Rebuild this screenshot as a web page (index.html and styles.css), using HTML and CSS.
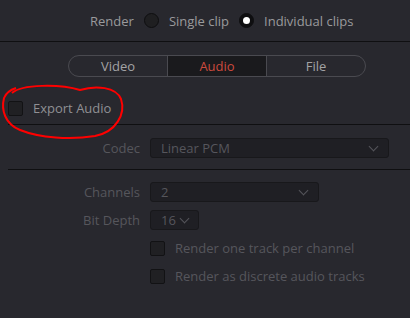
FILE: index.html
```html
<!DOCTYPE html>
<html lang="en">
<head>
  <meta charset="UTF-8">
  <title>Render Settings</title>
  <link rel="stylesheet" href="styles.css">
</head>
<body>
  <div class="panel">
    <div class="render-row">
      <span class="render-label">Render</span>
      <span class="radio"></span>
      <span class="radio-text">Single clip</span>
      <span class="radio checked"></span>
      <span class="radio-text">Individual clips</span>
    </div>

    <div class="tabs">
      <div class="tab">Video</div>
      <div class="tab active">Audio</div>
      <div class="tab">File</div>
    </div>

    <div class="export-row">
      <span class="checkbox"></span>
      <span class="export-text">Export Audio</span>
    </div>

    <div class="section codec">
      <div class="field">
        <span class="field-label">Codec</span>
        <div class="select wide">Linear PCM<span class="chev"></span></div>
      </div>
    </div>

    <div class="section options">
      <div class="field">
        <span class="field-label">Channels</span>
        <div class="select mid">2<span class="chev"></span></div>
      </div>
      <div class="field">
        <span class="field-label">Bit Depth</span>
        <div class="select small">16<span class="chev"></span></div>
      </div>
      <div class="check-line">
        <span class="checkbox"></span>
        <span>Render one track per channel</span>
      </div>
      <div class="check-line">
        <span class="checkbox"></span>
        <span>Render as discrete audio tracks</span>
      </div>
    </div>

    <!-- hand drawn annotation -->
    <svg class="scribble" width="130" height="60" viewBox="0 0 130 60">
      <path d="M12 9 C 22 0 60 0 80 6 C 96 1 116 3 121 15 C 126 30 116 48 95 52 C 70 56 40 54 20 46 C 5 40 1 26 4 14 C 6 9 10 6 16 4" fill="none" stroke="#f00" stroke-width="2"/>
    </svg>
  </div>
</body>
</html>
```

FILE: styles.css
```css
* {
  margin: 0;
  padding: 0;
  box-sizing: border-box;
}
body {
  width: 410px;
  height: 318px;
  background: #28282e;
  font-family: "Open Sans", sans-serif;
  font-size: 13px;
  color: #9a9a9c;
  overflow: hidden;
}
.panel {
  position: relative;
  height: 318px;
}
.render-row {
  height: 42px;
  display: flex;
  align-items: center;
  padding-left: 90px;
  border-bottom: 1px solid #0f0f11;
}
.render-label {
  margin-right: 10px;
}
.radio {
  width: 15px;
  height: 15px;
  border-radius: 50%;
  background: #1f1f21;
  border: 1px solid #0e0e10;
  margin-right: 10px;
  position: relative;
}
.radio.checked {
  background: #0e0e10;
}
.radio.checked::after {
  content: "";
  position: absolute;
  left: 3px;
  top: 3px;
  width: 7px;
  height: 7px;
  border-radius: 50%;
  background: #fff;
}
.radio-text {
  margin-right: 10px;
}
.tabs {
  margin: 13px 0 0 68px;
  width: 298px;
  height: 22px;
  display: flex;
  border: 1px solid #4a4a50;
  border-radius: 11px;
  overflow: hidden;
}
.tab {
  flex: 1;
  display: flex;
  align-items: center;
  justify-content: center;
  color: #a3a3a5;
}
.tab + .tab {
  border-left: 1px solid #4a4a50;
}
.tab.active {
  background: #1a1a1d;
  color: #cc4a3e;
}
.export-row {
  margin-left: 8px;
  height: 48px;
  display: flex;
  align-items: center;
  border-bottom: 1px solid #0f0f11;
  padding-top: 15px;
}
.checkbox {
  width: 15px;
  height: 15px;
  background: #202023;
  border: 1px solid #121214;
  border-radius: 2px;
  flex-shrink: 0;
}
.export-text {
  margin-left: 10px;
  color: #909094;
}
.section {
  margin-left: 8px;
}
.codec {
  height: 45px;
  padding-top: 13px;
  border-bottom: 1px solid #0f0f11;
}
.options {
  padding-top: 12px;
  display: flex;
  flex-direction: column;
  gap: 8px;
}
.field {
  display: flex;
  align-items: center;
  height: 20px;
}
.field-label {
  width: 142px;
  padding-right: 10px;
  text-align: right;
  color: #56565c;
}
.select {
  height: 20px;
  background: #1f1f24;
  border: 1px solid #18181b;
  border-radius: 3px;
  color: #56565c;
  padding-left: 10px;
  display: flex;
  align-items: center;
  position: relative;
}
.select.wide {
  width: 239px;
}
.select.mid {
  width: 169px;
}
.select.small {
  width: 49px;
}
.chev {
  position: absolute;
  right: 11px;
  top: 4px;
  width: 7px;
  height: 7px;
  border-right: 1.5px solid #55555b;
  border-bottom: 1.5px solid #55555b;
  transform: rotate(45deg);
}
.small .chev {
  right: 10px;
}
.check-line {
  display: flex;
  align-items: center;
  height: 20px;
  margin-left: 142px;
  color: #56565c;
}
.check-line .checkbox {
  margin-right: 10px;
}
.scribble {
  position: absolute;
  left: 0;
  top: 84px;
}
```
